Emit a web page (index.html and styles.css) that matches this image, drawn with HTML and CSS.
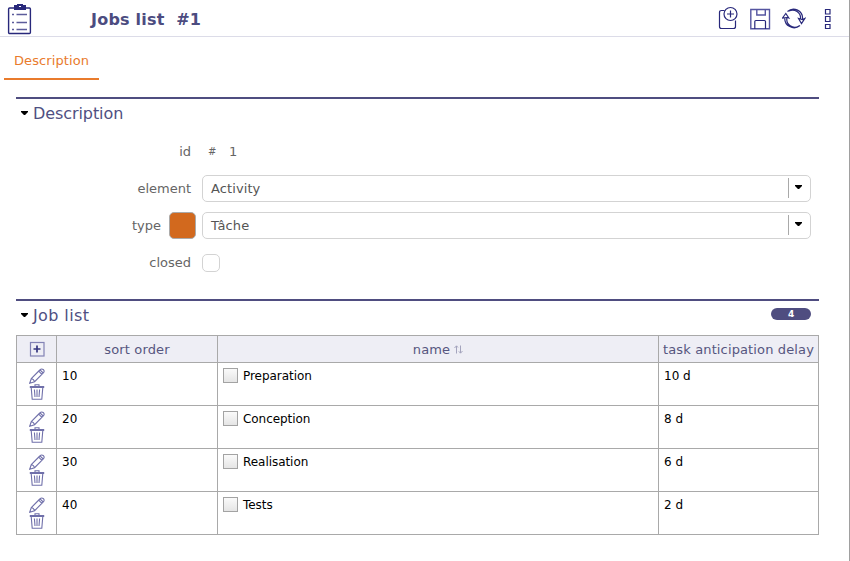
FILE: index.html
```html
<!DOCTYPE html>
<html lang="en">
<head>
<meta charset="utf-8">
<title>Jobs list #1</title>
<link rel="stylesheet" href="styles.css">
</head>
<body>
<svg class="defs" width="0" height="0" aria-hidden="true">
  <symbol id="pencil" viewBox="0 0 16 16"><path d="M.7 15.200 2.300 10.500 10.800 2Q12.500 .2 14.200 1.500Q16 3 14.300 5L5.600 13.700ZM2.300 10.500Q4.800 11 5.600 13.700M9.700 3.100 12.900 6.400M11 1.900 14.200 5" /></symbol>
  <symbol id="trash" viewBox="0 0 16 16"><path class="lid" d="M.8 3H15.200"/><path d="M6 2V.8H10V2M2.200 3.500 3.200 15.300H12.800L13.800 3.500M5.400 5.500 6 13M8 5.500V13M10.600 5.500 10 13" /></symbol>
</svg>
<main class="panel">
  <header class="bar">
    <svg class="logo" width="26" height="32" viewBox="0 0 26 32"><rect x="2.600" y="5" width="21.800" height="25.500" rx="1"/><path class="solid" d="M8.700 2.800h3V1.600h4.600v1.200h3v3.400h-10.600z"/><path class="dash" d="M6 11.500h2M6 19.500h2M6 26.500h2M10.500 11.500H21M10.500 19.500H21M10.500 26.500H21"/><path class="hole" d="M13 3.500h2"/></svg>
    <h1 class="title">Jobs list&nbsp; #1</h1>
    <div class="actions">
      <svg width="22" height="24" viewBox="0 0 22 24"><path d="M6.500 4.500H3.500Q1.500 4.500 1.500 6.500V20.500Q1.500 22.500 3.500 22.500H15.500Q17.500 22.500 17.500 20.500V14.500"/><circle cx="12.500" cy="8" r="6.500"/><path d="M12.500 4.500v7M9 8h7"/></svg>
      <svg class="save" width="22" height="24" viewBox="0 0 22 24"><path class="edge" d="M.8 3.500h18.700v19.300H.8zM6.800 3.500v5.500h8.500v-5.500"/><path d="M4.800 23v-7.500q0-1 1-1h8.700q1 0 1 1v7.500"/></svg>
      <svg width="24" height="24" viewBox="0 0 24 24"><path d="M5.500 5.500A9 9 0 0 1 20.500 13M18 19.500A9.300 9.300 0 0 1 2.800 11.500M7 5A8 8 0 0 1 18.500 13M17 20A8 8 0 0 1 5 11.500M.5 12 3.800 7.500 6.800 12 5 11.500ZM16.500 12.500 19.500 17.500 22.800 12.500 20.500 13.500Z"/></svg>
      <svg class="more" width="8" height="24" viewBox="0 0 8 24"><path d="M1.500 3.500h4.500v4.500h-4.500zM1.500 10.500h4.500v5h-4.500zM1.500 18.500h4.500v4h-4.500z"/></svg>
    </div>
  </header>
  <nav class="tabs"><a class="tab">Description</a></nav>

  <section class="section details">
    <h2 class="heading"><i class="arrow"></i>Description</h2>
    <div class="form">
      <div class="field"><label>id</label><div class="ident"><small>#</small>1</div></div>
      <div class="field"><label>element</label><div class="select">Activity<span class="drop"><i class="arrow"></i></span></div></div>
      <div class="field"><label class="typed">type<span class="swatch"></span></label><div class="select">Tâche<span class="drop"><i class="arrow"></i></span></div></div>
      <div class="field"><label>closed</label><span class="check"></span></div>
    </div>
  </section>

  <section class="section">
    <h2 class="heading"><i class="arrow"></i><span class="job">Job list</span><span class="count">4</span></h2>
    <table class="jobs">
      <colgroup><col class="c-tools"><col class="c-order"><col class="c-name"><col class="c-delay"></colgroup>
      <thead><tr>
        <th class="new"><svg class="add" width="16" height="16" viewBox="0 0 16 16"><rect x="1.500" y="1.500" width="13.500" height="13.500"/><path d="M4.500 8h7M8 4.500v7"/></svg></th>
        <th>sort order</th>
        <th>name<svg class="sort" width="9" height="9" viewBox="0 0 9 9"><path d="M2.500 8.500V1M.5 3 2.500 .8 4 2.500M6.500 .5V8M4.800 6.300 6.500 8.200 8.500 6"/></svg></th>
        <th>task anticipation delay</th>
      </tr></thead>
      <tbody>
        <tr><td class="tools"><svg><use href="#pencil"/></svg><svg><use href="#trash"/></svg></td><td>10</td><td><span class="name"><i class="box"></i>Preparation</span></td><td>10 d</td></tr>
        <tr><td class="tools"><svg><use href="#pencil"/></svg><svg><use href="#trash"/></svg></td><td>20</td><td><span class="name"><i class="box"></i>Conception</span></td><td>8 d</td></tr>
        <tr><td class="tools"><svg><use href="#pencil"/></svg><svg><use href="#trash"/></svg></td><td>30</td><td><span class="name"><i class="box"></i>Realisation</span></td><td>6 d</td></tr>
        <tr><td class="tools"><svg><use href="#pencil"/></svg><svg><use href="#trash"/></svg></td><td>40</td><td><span class="name"><i class="box"></i>Tests</span></td><td>2 d</td></tr>
      </tbody>
    </table>
  </section>
</main>
</body>
</html>
```
FILE: styles.css
```css
* { box-sizing: border-box; }
body { margin: 0; background: #fff; font: 13px/18px Verdana, "DejaVu Sans", sans-serif; color: #656565; }
svg { display: block; fill: none; stroke: #28287b; stroke-width: 1.2; flex: none; }
.defs { position: absolute; }
.panel { height: 561px; border-right: 1px solid #a0a0a0; }
.bar { display: flex; align-items: center; height: 37px; padding: 0 17px 0 6px; border-bottom: 1px solid #dcdce8; }
.logo { margin-top: 2px; stroke-width: 1.4; }
.logo .solid { fill: #28287b; }
.logo .dash { stroke: #5c5c9b; stroke-width: 1.3; }
.logo .hole { stroke: #fff; stroke-width: 1; }
.title { margin: 3px 0 0 59px; font-size: 16px; line-height: 20px; font-weight: bold; color: #4c4c80; letter-spacing: .22px; }
.actions { display: flex; margin-left: auto; gap: 10px; }
.save .edge { stroke: #5555a0; stroke-width: 1.4; }
.more { margin-left: 8px; }
.tabs { padding-left: 4px; height: 60px; display: flex; align-items: flex-start; }
.tab { height: 43px; width: 95px; padding: 15px 0 0 10px; border-bottom: 2px solid #e97b2c; color: #e97b2c; letter-spacing: .1px; }
.section { width: 803px; margin-left: 16px; border-top: 2px solid #4f4d80; }
.details { height: 202px; }
.heading { display: flex; align-items: center; height: 28px; margin: 0; padding: 2px 8px 0 5px; font-size: 16px; line-height: 24px; font-weight: normal; color: #4f4f82; letter-spacing: -.08px; }
.job { letter-spacing: .4px; }
.arrow { width: 7px; height: 4px; background: #000; clip-path: polygon(0 0, 100% 0, 100% 25%, 58% 100%, 42% 100%, 0 25%); }
.heading .arrow { margin: -2px 5px 0 0; }
.count { margin: -4px 0 0 auto; width: 40px; height: 12px; border-radius: 6px; background: #4f4d80; color: #fff; font-size: 9px; font-weight: bold; line-height: 12px; text-align: center; }
.form { display: grid; grid-auto-rows: 37px; margin-top: 6px; }
.field { display: grid; grid-template-columns: 175px 609px; column-gap: 11px; align-items: center; }
.field label { text-align: right; }
.typed { display: flex; align-items: center; justify-content: flex-end; gap: 8px; margin-right: -5px; }
.swatch { width: 27px; height: 27px; border: 1px solid #aaa; border-radius: 5px; background: #d2691e; }
.ident { display: flex; align-items: center; padding: 1px 0 0 6px; }
.ident small { width: 21px; font-size: 10px; }
.select { display: flex; justify-content: space-between; align-items: center; height: 27px; padding: 0 0 0 8px; border: 1px solid #d3d3d3; border-radius: 5px; color: #555; letter-spacing: .1px; }
.drop { width: 22px; height: 20px; margin-top: -1px; border-left: 1px solid #a9a9a9; padding: 7px 0 0 6px; }
.drop .arrow { display: block; }
.check { width: 18px; height: 18px; border: 1px solid #d3d3d3; border-radius: 5px; }
.jobs { width: 803px; margin-top: 6px; table-layout: fixed; border-collapse: separate; border-spacing: 0; border: solid #a9a9a9; border-width: 1px 0 0 1px; }
.c-tools { width: 40px; }
.c-order { width: 161px; }
.c-name { width: 441px; }
.c-delay { width: 160px; }
.jobs th, .jobs td { border: solid #a9a9a9; border-width: 0 1px 1px 0; padding: 0; }
.jobs th { height: 27px; padding-top: 1px; background: #eeeef5; color: #56567f; font-weight: normal; letter-spacing: .13px; white-space: nowrap; }
.jobs th.new { padding: 0 0 1px; }
.jobs td { height: 43px; padding: 4px 5px; vertical-align: top; font-size: 12px; color: #000; }
.jobs td.tools { padding: 5px 0 0 12px; }
.tools svg { width: 16px; height: 16px; stroke: #7070aa; stroke-width: 1.1; }
.lid { stroke-width: 2; }
.add { margin: auto; stroke: #8383b5; }
.add path { stroke: #35357f; stroke-width: 1.7; }
.sort { display: inline-block; margin-left: 4px; stroke: #a4a4bd; stroke-width: 1; }
.name { display: flex; align-items: center; gap: 5px; letter-spacing: -.05px; }
.box { width: 15px; height: 15px; margin-top: -2px; border: 1px solid #a3a3a3; background: linear-gradient(#fafafa, #e5e5e5); }
```
